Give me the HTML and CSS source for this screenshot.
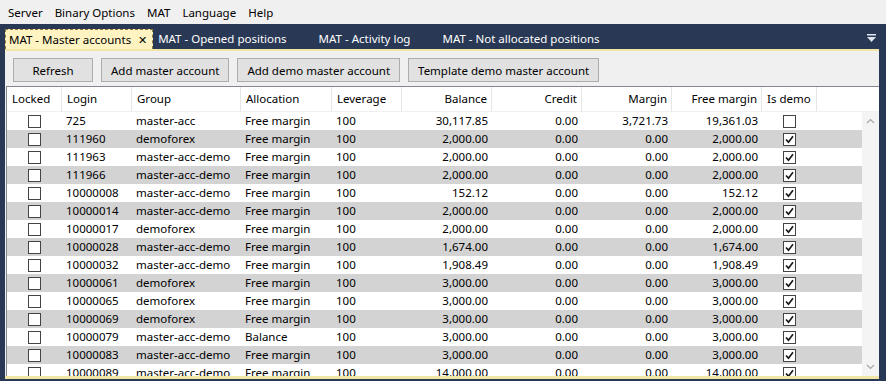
FILE: index.html
```html
<!DOCTYPE html>
<html lang="en">

<head>
    <meta charset="UTF-8">
    <title>MAT - Master accounts</title>
    <link rel="stylesheet" href="styles.css">
</head>

<body>

    <div class="menubar">
        <span>Server</span>
        <span>Binary Options</span>
        <span>MAT</span>
        <span>Language</span>
        <span>Help</span>
    </div>

    <div class="tabstrip">
        <div class="tab active">MAT - Master accounts <span class="close">&#x2715;</span></div>
        <div class="tab">MAT - Opened positions</div>
        <div class="tab">MAT - Activity log</div>
        <div class="tab">MAT - Not allocated positions</div>
        <svg class="tab-menu" width="9" height="9" viewBox="0 0 9 9">
            <rect x="0" y="0" width="9" height="1.5" fill="#dfe4ee"/>
            <path d="M0 3 L9 3 L4.5 8 Z" fill="#dfe4ee"/>
        </svg>
    </div>

    <div class="panel">
        <div class="toolbar">
            <button>Refresh</button>
            <button>Add master account</button>
            <button>Add demo master account</button>
            <button>Template demo master account</button>
        </div>

        <div class="grid">
            <div class="grid-head cols">
                <div>Locked</div>
                <div>Login</div>
                <div>Group</div>
                <div>Allocation</div>
                <div>Leverage</div>
                <div class="num">Balance</div>
                <div class="num">Credit</div>
                <div class="num">Margin</div>
                <div class="num">Free margin</div>
                <div>Is demo</div>
                <div class="filler"></div>
            </div>
            <div class="grid-body">
                <div class="rows" id="rows"></div>
                <div class="vscroll">
                    <svg width="9" height="6" viewBox="0 0 9 6"><path d="M1 5 L4.5 1.5 L8 5" fill="none" stroke="#a6a6a6" stroke-width="1.2"/></svg>
                    <svg width="9" height="6" viewBox="0 0 9 6"><path d="M1 1 L4.5 4.5 L8 1" fill="none" stroke="#a6a6a6" stroke-width="1.2"/></svg>
                </div>
            </div>
        </div>
    </div>

    <script>
        const accounts = [
            ['725', 'master-acc', 'Free margin', '30,117.85', '0.00', '3,721.73', '19,361.03', false],
            ['111960', 'demoforex', 'Free margin', '2,000.00', '0.00', '0.00', '2,000.00', true],
            ['111963', 'master-acc-demo', 'Free margin', '2,000.00', '0.00', '0.00', '2,000.00', true],
            ['111966', 'master-acc-demo', 'Free margin', '2,000.00', '0.00', '0.00', '2,000.00', true],
            ['10000008', 'master-acc-demo', 'Free margin', '152.12', '0.00', '0.00', '152.12', true],
            ['10000014', 'master-acc-demo', 'Free margin', '2,000.00', '0.00', '0.00', '2,000.00', true],
            ['10000017', 'demoforex', 'Free margin', '2,000.00', '0.00', '0.00', '2,000.00', true],
            ['10000028', 'master-acc-demo', 'Free margin', '1,674.00', '0.00', '0.00', '1,674.00', true],
            ['10000032', 'master-acc-demo', 'Free margin', '1,908.49', '0.00', '0.00', '1,908.49', true],
            ['10000061', 'demoforex', 'Free margin', '3,000.00', '0.00', '0.00', '3,000.00', true],
            ['10000065', 'demoforex', 'Free margin', '3,000.00', '0.00', '0.00', '3,000.00', true],
            ['10000069', 'demoforex', 'Free margin', '3,000.00', '0.00', '0.00', '3,000.00', true],
            ['10000079', 'master-acc-demo', 'Balance', '3,000.00', '0.00', '0.00', '3,000.00', true],
            ['10000083', 'master-acc-demo', 'Free margin', '3,000.00', '0.00', '0.00', '3,000.00', true],
            ['10000089', 'master-acc-demo', 'Free margin', '14,000.00', '0.00', '0.00', '14,000.00', true]
        ];

        const tick = '<svg width="11" height="11" viewBox="0 0 11 11"><path d="M2 5.5 L4.5 8.2 L9 2.2" fill="none" stroke="#1a1a1a" stroke-width="1.7"/></svg>';

        function checkbox(checked) {
            return '<span class="check">' + (checked ? tick : '') + '</span>';
        }

        let html = '';
        accounts.forEach(function (a) {
            html += '<div class="row cols">' +
                '<div class="center">' + checkbox(false) + '</div>' +
                '<div>' + a[0] + '</div>' +
                '<div>' + a[1] + '</div>' +
                '<div>' + a[2] + '</div>' +
                '<div>100</div>' +
                '<div class="num">' + a[3] + '</div>' +
                '<div class="num">' + a[4] + '</div>' +
                '<div class="num">' + a[5] + '</div>' +
                '<div class="num">' + a[6] + '</div>' +
                '<div class="center">' + checkbox(a[7]) + '</div>' +
                '<div></div>' +
                '</div>';
        });
        document.getElementById('rows').innerHTML = html;
    </script>

</body>

</html>
```

FILE: styles.css
```css
body {
    margin: 0;
    height: 381px;
    overflow: hidden;
    background-color: #293955;
    font-family: "Noto Sans", Arial, sans-serif;
    font-size: 11.5px;
    color: #000;
}

.menubar {
    height: 24px;
    background-color: #f0f0f0;
    display: flex;
    align-items: center;
    padding-left: 8px;
    gap: 12px;
}

.tabstrip {
    height: 25px;
    display: flex;
    align-items: flex-end;
    padding-left: 5px;
    position: relative;
}

.tab {
    height: 20px;
    line-height: 19px;
    padding: 0;
    margin-right: 32px;
    color: #fff;
    box-sizing: border-box;
    white-space: nowrap;
}

.tab.active {
    background-color: #fff3c2;
    color: #000;
    border: 1px dashed #8c7a3c;
    border-bottom: none;
    padding: 0 5px 0 3px;
    margin-right: 5px;
}

.tab .close {
    font-size: 11px;
    margin-left: 4px;
}

.tab-menu {
    position: absolute;
    right: 10px;
    top: 10px;
}

.panel {
    margin: 0 7px 0 5px;
    height: 325px;
    background-color: #f0f0f0;
    border-top: 2px solid #f2e6a6;
    border-bottom: 3px solid #f2e6a6;
    display: flex;
    flex-direction: column;
}

.toolbar {
    height: 35px;
    box-sizing: border-box;
    padding: 7px 0 0 8px;
    display: flex;
    gap: 8px;
}

.toolbar button {
    height: 24px;
    min-width: 80px;
    padding: 0 9px;
    background-color: #e1e1e1;
    border: 1px solid #adadad;
    font-family: inherit;
    font-size: 11.5px;
    color: #000;
}

.grid {
    flex: 1;
    margin-left: 1px;
    border-top: 1px solid #828790;
    border-left: 1px solid #828790;
    background-color: #fff;
    display: flex;
    flex-direction: column;
    overflow: hidden;
}

.cols {
    display: grid;
    grid-template-columns: 55px 70px 109px 91px 70px 90px 90px 90px 90px 55px 1fr;
}

.grid-head {
    height: 25px;
    flex: none;
}

.grid-head > div {
    line-height: 24px;
    padding-left: 5px;
    border-right: 1px solid #e6e6e6;
    border-bottom: 1px solid #f0f0f0;
}

.grid-head > div.num {
    padding: 0 4px 0 0;
    text-align: right;
}

.grid-head > div.filler {
    border-right: none;
}

.grid-body {
    flex: 1;
    display: flex;
    overflow: hidden;
}

.rows {
    flex: 1;
}

.row {
    height: 18px;
    line-height: 18px;
}

.row:nth-child(even) {
    background-color: #d3d3d3;
}

.row > div {
    padding-left: 4px;
    white-space: nowrap;
}

.row > div.num {
    padding: 0 4px 0 0;
    text-align: right;
}

.row > div.center {
    padding: 0;
    display: flex;
    justify-content: center;
    align-items: center;
}

.check {
    width: 13px;
    height: 13px;
    box-sizing: border-box;
    border: 1px solid #444;
    background-color: #fff;
    display: flex;
    align-items: center;
    justify-content: center;
}

.vscroll {
    width: 17px;
    background-color: #f4f4f4;
    display: flex;
    flex-direction: column;
    justify-content: space-between;
    align-items: center;
    padding: 6px 0 6px;
}
```
